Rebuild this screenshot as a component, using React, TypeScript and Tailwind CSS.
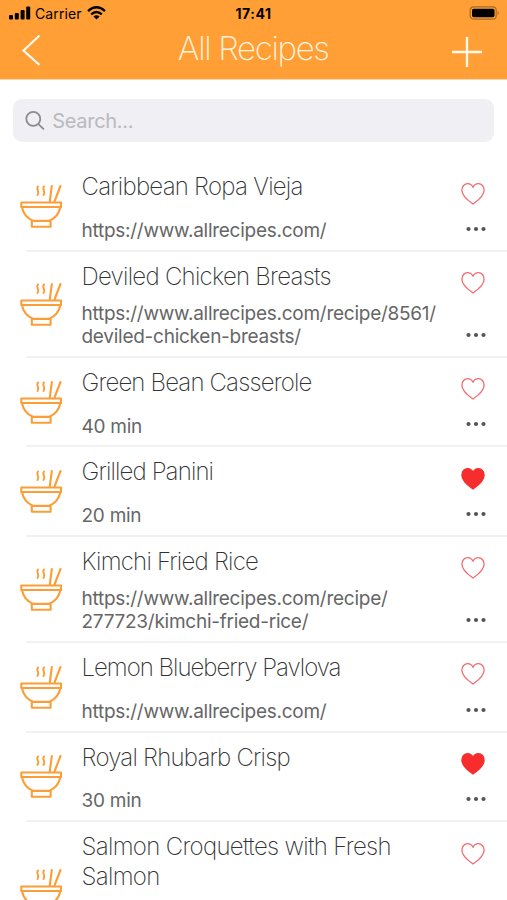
import React from "react";

type Recipe = {
  title: string[];
  titleSpacing: string;
  details: string[];
  favorite?: boolean;
  height: string;
};

const single = "h-[89.6px]";
const double = "h-[106px]";

const recipes: Recipe[] = [
  { title: ["Caribbean Ropa Vieja"], titleSpacing: "tracking-[-0.76px]", details: ["https://www.allrecipes.com/"], height: single },
  { title: ["Deviled Chicken Breasts"], titleSpacing: "tracking-[-0.73px]", details: ["https://www.allrecipes.com/recipe/8561/", "deviled-chicken-breasts/"], height: double },
  { title: ["Green Bean Casserole"], titleSpacing: "tracking-[-0.84px]", details: ["40 min"], height: single },
  { title: ["Grilled Panini"], titleSpacing: "tracking-[-0.86px]", details: ["20 min"], favorite: true, height: single },
  { title: ["Kimchi Fried Rice"], titleSpacing: "tracking-[-0.78px]", details: ["https://www.allrecipes.com/recipe/", "277723/kimchi-fried-rice/"], height: double },
  { title: ["Lemon Blueberry Pavlova"], titleSpacing: "tracking-[-1px]", details: ["https://www.allrecipes.com/"], height: single },
  { title: ["Royal Rhubarb Crisp"], titleSpacing: "tracking-[-0.79px]", details: ["30 min"], favorite: true, height: single },
  { title: ["Salmon Croquettes with Fresh", "Salmon"], titleSpacing: "tracking-[-0.68px]", details: [], height: "h-[137px]" },
];

function Bowl() {
  return (
    <svg className="h-[44px] w-[42px] shrink-0" viewBox="0 0 42 44" fill="none" stroke="#fb9e38" strokeWidth="2.1" strokeLinejoin="round" strokeLinecap="round">
      <path d="M1.300 18.500H41V23H1.300Z" />
      <path d="M1.900 23C3.300 30 7.800 34.500 12.900 36.700H29.400C34.500 34.500 39 30 40.400 23" />
      <path d="M11.800 37H30.600V42.700H11.800Z" />
      <path d="M29.800 17.500L31.800 2M34.500 17.500L40.500 2" />
      <path d="M18 2.500C15.300 5.200 20.300 7.200 17.500 11M24 2.500C21.300 5.200 26.300 7.200 23.500 11" strokeWidth="2" />
    </svg>
  );
}

function Heart({ filled }: { filled?: boolean }) {
  return (
    <svg className="h-[24px] w-[26px]" viewBox="0 0 26 24" fill={filled ? "#f72d2d" : "none"} stroke={filled ? "#f72d2d" : "#f26b70"} strokeWidth="1.300" strokeLinejoin="round">
      <path d="M13 22C9.500 19.500 1.900 14.500 1.900 8.200C1.900 4.400 4.400 1.700 7.600 1.700C10.100 1.700 12 3.200 13 5.300C14 3.200 15.900 1.700 18.400 1.700C21.600 1.700 24.100 4.400 24.100 8.200C24.100 14.500 16.500 19.500 13 22Z" />
    </svg>
  );
}

function Dots() {
  return (
    <svg className="mr-[1px] h-[6px] w-[20px]" viewBox="0 0 20 6" fill="#555">
      <circle cx="2.500" cy="3" r="2.100" />
      <circle cx="10" cy="3" r="2.100" />
      <circle cx="17.500" cy="3" r="2.100" />
    </svg>
  );
}

function RecipeRow({ recipe }: { recipe: Recipe }) {
  return (
    <li className={`flex shrink-0 flex-col ${recipe.height}`}>
      <div className="flex min-h-0 flex-1 items-stretch pl-[20px] pr-[20px]">
        <div className="flex w-[61.500px] shrink-0 items-center">
          <Bowl />
        </div>
        <div className="flex flex-1 flex-col justify-between pb-[7.2px] pt-[10px]">
          <h2 className={`whitespace-nowrap text-[24px] font-extralight leading-[29.5px] text-[#333] ${recipe.titleSpacing}`}>
            {recipe.title.map((line) => (
              <span key={line} className="block">{line}</span>
            ))}
          </h2>
          <p className="whitespace-nowrap text-[19px] leading-[23.5px] tracking-[-0.26px] text-[#666]">
            {recipe.details.map((line) => (
              <span key={line} className="block">{line}</span>
            ))}
          </p>
        </div>
        <div className="flex w-[27px] shrink-0 flex-col items-end justify-between pb-[18px] pt-[19.500px]">
          <div className="mr-[1px]"><Heart filled={recipe.favorite} /></div>
          <Dots />
        </div>
      </div>
      <div className="ml-[26px] h-[2px] shrink-0 bg-[#f1f1f2]" />
    </li>
  );
}

export default function App() {
  return (
    <div className="flex h-[900px] w-[507px] flex-col overflow-hidden bg-white font-['Inter','Liberation_Sans',sans-serif]">
      <header className="h-[80px] shrink-0 border-b border-[#fbd9b2] bg-[#ff9f35]">
        <div className="grid h-[26px] grid-cols-3 items-center pl-[9px] pr-[7px] text-black">
          <div className="flex items-center">
            <svg className="h-[14px] w-[22px]" viewBox="0 0 22 14" fill="currentColor">
              <rect x="0" y="9" width="4" height="4.500" rx="1" />
              <rect x="5.800" y="7" width="4" height="6.500" rx="1" />
              <rect x="11.600" y="4" width="4" height="9.500" rx="1" />
              <rect x="17.200" y="0.500" width="4" height="13" rx="1" />
            </svg>
            <span className="ml-[4px] mt-px text-[14px] leading-[16px] tracking-[0.12px]">Carrier</span>
            <svg className="ml-[5px] h-[14px] w-[19px]" viewBox="0 0 19 14" fill="none" stroke="currentColor" strokeWidth="2.300">
              <path d="M1 5.100Q9.500 -2.500 18 5.100M4.200 8.400Q9.500 3.500 14.800 8.400" />
              <path d="M9.500 13.500L6.400 10.500Q9.500 7.800 12.600 10.500Z" fill="currentColor" stroke="none" />
            </svg>
          </div>
          <div className="mt-px pr-[2px] text-center text-[14px] font-bold leading-[16px] tracking-[0.5px]">17:41</div>
          <div className="flex justify-end">
            <svg className="h-[14px] w-[31px]" viewBox="0 0 31 14">
              <rect x="1.200" y="0.800" width="26" height="12.400" rx="3.500" fill="none" stroke="#a86a28" strokeWidth="1.200" />
              <rect x="3" y="2.700" width="22.500" height="8.600" rx="1.800" fill="#000" />
              <path d="M28.700 4.800Q30.800 7 28.700 9.200Z" fill="#a86a28" />
            </svg>
          </div>
        </div>
        <div className="flex h-[50px] items-center justify-between pl-[21.500px] pr-[24px]">
          <svg className="mb-[2px] h-[32px] w-[20px]" viewBox="0 0 20 32" fill="none" stroke="#fffaf0" strokeWidth="2.2">
            <path d="M17.500 1.500L1.500 16.500L17.500 31" />
          </svg>
          <h1 className="mb-[6px] ml-[14px] text-[33px] font-extralight leading-[42px] tracking-[-1.35px] text-[#fff3de]">All Recipes</h1>
          <svg className="mt-[2px] h-[32px] w-[32px]" viewBox="0 0 32 32" stroke="#fffaf0" strokeWidth="2.300">
            <path d="M1 16H31M16 1V31" />
          </svg>
        </div>
      </header>
      <main className="flex min-h-0 flex-1 flex-col">
        <label className="mx-[13px] mt-[19px] flex h-[43px] shrink-0 items-center rounded-[9px] bg-[#efeff4] pl-[12px]">
          <svg className="h-[21px] w-[21px]" viewBox="0 0 21 21" fill="none" stroke="#8b8b90" strokeWidth="1.900" strokeLinecap="round">
            <circle cx="8.800" cy="8.800" r="7.400" />
            <path d="M14.300 14.300L19.500 19.300" />
          </svg>
          <input className="ml-[7.500px] mt-px w-full bg-transparent text-[20px] tracking-[-0.3px] outline-none placeholder:text-[#b9b9be]" placeholder="Search..." />
        </label>
        <ul className="mt-[20.200px] flex flex-col">
          {recipes.map((recipe) => (
            <RecipeRow key={recipe.title[0]} recipe={recipe} />
          ))}
        </ul>
      </main>
    </div>
  );
}
